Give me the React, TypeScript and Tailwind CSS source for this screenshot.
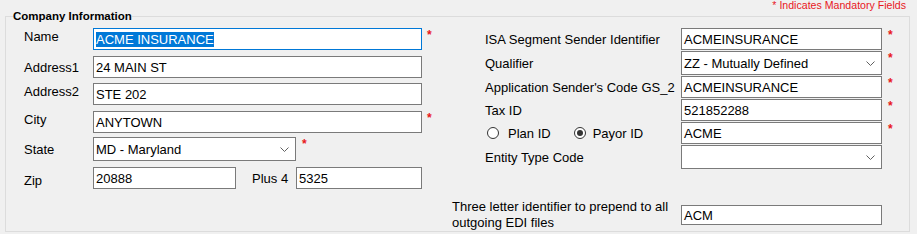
import React from 'react';
import clsx from 'clsx';

function TextBox({ value, width, focused, selected, height = 'h-[22px]' }: { value?: string; width: string; focused?: boolean; selected?: boolean; height?: string }) {
  return (
    <div
      className={clsx(
        'shrink-0 border bg-white pl-[2px] flex items-center whitespace-nowrap leading-[15px]',
        width,
        height,
        focused ? 'border-[#0078d7]' : 'border-[#7a7a7a]'
      )}
    >
      {selected ? <span className="bg-[#0078d7] text-white">{value}</span> : <span>{value}</span>}
    </div>
  );
}

function ComboBox({ value, width }: { value?: string; width: string }) {
  return (
    <div className={clsx('shrink-0 h-[24px] border border-[#7a7a7a] bg-white pl-[2px] pr-[6px] flex items-center justify-between whitespace-nowrap', width)}>
      <span>{value}</span>
      <svg width="9" height="5" viewBox="0 0 9 5" className="mt-[1px]">
        <polyline points="0.5,0.5 4.5,4.5 8.5,0.5" fill="none" stroke="#606060" strokeWidth="1" />
      </svg>
    </div>
  );
}

function Star({ className }: { className?: string }) {
  return <span className={clsx('self-start text-[12px] leading-[12px] font-bold text-[#e8171d] mt-[1px]', className)}>*</span>;
}

function Radio({ checked }: { checked?: boolean }) {
  return (
    <span className="w-[12px] h-[12px] shrink-0 rounded-full border border-[#333333] bg-white flex items-center justify-center">
      {checked && <span className="w-[6px] h-[6px] rounded-full bg-[#333333]" />}
    </span>
  );
}

export default function App() {
  return (
    <div className="w-[917px] h-[234px] bg-[#f0f0f0] overflow-hidden text-[13px] text-black font-['Liberation_Sans',Arial,sans-serif]">
      <div className="h-[9px] flex justify-end pr-[11px] text-[10.6px] leading-[11px] text-[#e8171d]">* Indicates Mandatory Fields</div>

      <fieldset className="ml-[5px] w-[905px] h-[223px] border border-[#dcdcdc]">
        <legend className="ml-[7px] px-0 text-[11.5px] leading-[14px] font-bold">Company Information</legend>

        <div className="flex">
          {/* left column */}
          <div className="w-[434px] pl-[18px] flex flex-col leading-[15px]">
            <div className="mt-[5px] flex items-center">
              <span className="w-[69px] mb-[6px]">Name</span>
              <TextBox value="ACME INSURANCE" width="w-[329px]" focused selected />
              <Star className="ml-[5px]" />
            </div>
            <div className="mt-[6px] flex items-center">
              <span className="w-[69px]">Address1</span>
              <TextBox value="24 MAIN ST" width="w-[329px]" />
            </div>
            <div className="mt-[5px] flex items-center">
              <span className="w-[69px] mb-[5px]">Address2</span>
              <TextBox value="STE 202" width="w-[329px]" />
            </div>
            <div className="mt-[6px] flex items-center">
              <span className="w-[69px] mb-[6px]">City</span>
              <TextBox value="ANYTOWN" width="w-[329px]" />
              <Star className="ml-[5px]" />
            </div>
            <div className="mt-[4px] flex items-center">
              <span className="w-[69px]">State</span>
              <ComboBox value="MD - Maryland" width="w-[203px]" />
              <Star className="ml-[6px]" />
            </div>
            <div className="mt-[6px] flex items-center">
              <span className="w-[69px] mt-[4px]">Zip</span>
              <TextBox value="20888" width="w-[143px]" />
              <span className="w-[60px] pl-[16px]">Plus 4</span>
              <TextBox value="5325" width="w-[126px]" />
            </div>
          </div>

          {/* right column */}
          <div className="ml-[12px] flex flex-col leading-[15px]">
            <div className="mt-[5px] flex items-center">
              <span className="w-[229px] pl-[33px] whitespace-nowrap">ISA Segment Sender Identifier</span>
              <TextBox value="ACMEINSURANCE" width="w-[201px]" />
              <Star className="ml-[6px]" />
            </div>
            <div className="mt-[1px] flex items-center">
              <span className="w-[229px] pl-[33px] whitespace-nowrap">Qualifier</span>
              <ComboBox value="ZZ - Mutually Defined" width="w-[201px]" />
              <Star className="ml-[6px]" />
            </div>
            <div className="mt-[1px] flex items-center">
              <span className="w-[229px] pl-[33px] whitespace-nowrap">Application Sender's Code GS_2</span>
              <TextBox value="ACMEINSURANCE" width="w-[201px]" />
              <Star className="ml-[6px]" />
            </div>
            <div className="mt-[1px] flex items-center">
              <span className="w-[229px] pl-[33px] whitespace-nowrap">Tax ID</span>
              <TextBox value="521852288" width="w-[201px]" />
              <Star className="ml-[6px]" />
            </div>
            <div className="mt-[1px] flex items-center">
              <div className="w-[229px] pl-[35px] flex items-center whitespace-nowrap">
                <Radio />
                <span className="ml-[9px]">Plan ID</span>
                <span className="ml-[23px] flex items-center">
                  <Radio checked />
                  <span className="ml-[7px]">Payor ID</span>
                </span>
              </div>
              <TextBox value="ACME" width="w-[201px]" />
              <Star className="ml-[6px]" />
            </div>
            <div className="mt-[1px] flex items-center">
              <span className="w-[229px] pl-[33px] whitespace-nowrap">Entity Type Code</span>
              <ComboBox width="w-[201px]" />
            </div>
            <div className="mt-[30px] flex items-center">
              <span className="w-[229px] leading-[16px]">
                Three letter identifier to prepend to all
                <br />
                outgoing EDI files
              </span>
              <TextBox value="ACM" width="w-[201px]" height="h-[20px]" />
            </div>
          </div>
        </div>
      </fieldset>
    </div>
  );
}
